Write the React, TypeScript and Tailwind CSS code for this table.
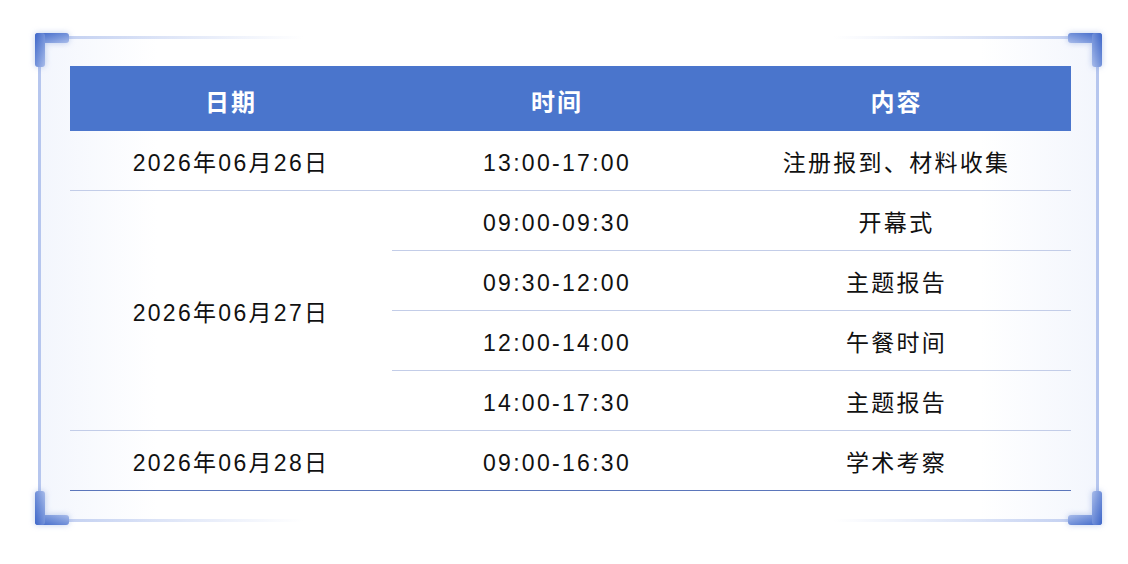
const rows = [
  { date: "2026年06月26日", span: 1, items: [["13:00-17:00", "注册报到、材料收集"]] },
  {
    date: "2026年06月27日",
    span: 4,
    items: [
      ["09:00-09:30", "开幕式"],
      ["09:30-12:00", "主题报告"],
      ["12:00-14:00", "午餐时间"],
      ["14:00-17:30", "主题报告"],
    ],
  },
  { date: "2026年06月28日", span: 1, items: [["09:00-16:30", "学术考察"]] },
];

function Corner({ className }: { className: string }) {
  return (
    <svg
      className={`pointer-events-none absolute h-[34px] w-[34px] drop-shadow-[0_0_3px_rgba(74,114,204,0.35)] ${className}`}
      viewBox="0 0 34 34"
      aria-hidden="true"
    >
      <defs>
        <linearGradient id="cg" x1="0" y1="0" x2="1" y2="1">
          <stop offset="0" stopColor="#3e66c8" />
          <stop offset="0.6" stopColor="#7b98dc" />
          <stop offset="1" stopColor="#a9bcea" />
        </linearGradient>
      </defs>
      <rect x="0" y="0" width="34" height="10" rx="3" fill="url(#cg)" />
      <rect x="0" y="0" width="10" height="34" rx="3" fill="url(#cg)" />
    </svg>
  );
}

export default function App() {
  const font = { fontFamily: '"Liberation Sans", "Noto Sans CJK SC", sans-serif' };
  return (
    <div className="h-[564px] w-[1128px] bg-white pl-[38px] pt-[36px]" style={font}>
      <div className="relative h-[486px] w-[1061px] border-x-[3px] border-[#b6c6ee] bg-[linear-gradient(to_right,#f3f6fd,#ffffff_11%,#ffffff_89%,#f3f6fd)] pl-[29px] pt-[30px]">
        {/* fading top / bottom rules */}
        <div className="absolute -left-[3px] -right-[3px] top-0 h-[3px] bg-[linear-gradient(to_right,#bfcdf0,rgba(255,255,255,0)_25%,rgba(255,255,255,0)_75%,#bfcdf0)]" />
        <div className="absolute -left-[3px] -right-[3px] bottom-0 h-[3px] bg-[linear-gradient(to_right,#bfcdf0,rgba(255,255,255,0)_25%,rgba(255,255,255,0)_75%,#bfcdf0)]" />
        <Corner className="-left-[6px] -top-[3px]" />
        <Corner className="-right-[6px] -top-[3px] scale-x-[-1]" />
        <Corner className="-left-[6px] -bottom-[3px] scale-y-[-1]" />
        <Corner className="-right-[6px] -bottom-[3px] scale-[-1]" />

        <div className="w-[1001px]">
          <div className="grid h-[65px] grid-cols-[322px_330px_349px] items-center bg-[#4a75cc] pt-[8px] text-center text-[24px] font-bold tracking-[0.08em] text-white">
            <div>日期</div>
            <div>时间</div>
            <div>内容</div>
          </div>
          <div className="grid grid-cols-[322px_330px_349px] grid-rows-[repeat(6,60px)] text-center text-[23px] tracking-[0.1em] text-[#111]">
            {rows.map((r, ri) => {
              const last = ri === rows.length - 1;
              const line = last ? "border-[#5b76bb]" : "border-[#c3cde8]";
              return [
                <div
                  key={`d${ri}`}
                  className={`flex items-center justify-center border-b pt-[5px] ${line} ${r.span === 4 ? "row-span-4" : ""}`}
                >
                  {r.date}
                </div>,
                ...r.items.flatMap(([t, c], ii) => [
                  <div key={`t${ri}-${ii}`} className={`flex items-center justify-center border-b pt-[5px] ${line}`}>
                    {t}
                  </div>,
                  <div key={`c${ri}-${ii}`} className={`flex items-center justify-center border-b pt-[5px] ${line}`}>
                    {c}
                  </div>,
                ]),
              ];
            })}
          </div>
        </div>
      </div>
    </div>
  );
}
